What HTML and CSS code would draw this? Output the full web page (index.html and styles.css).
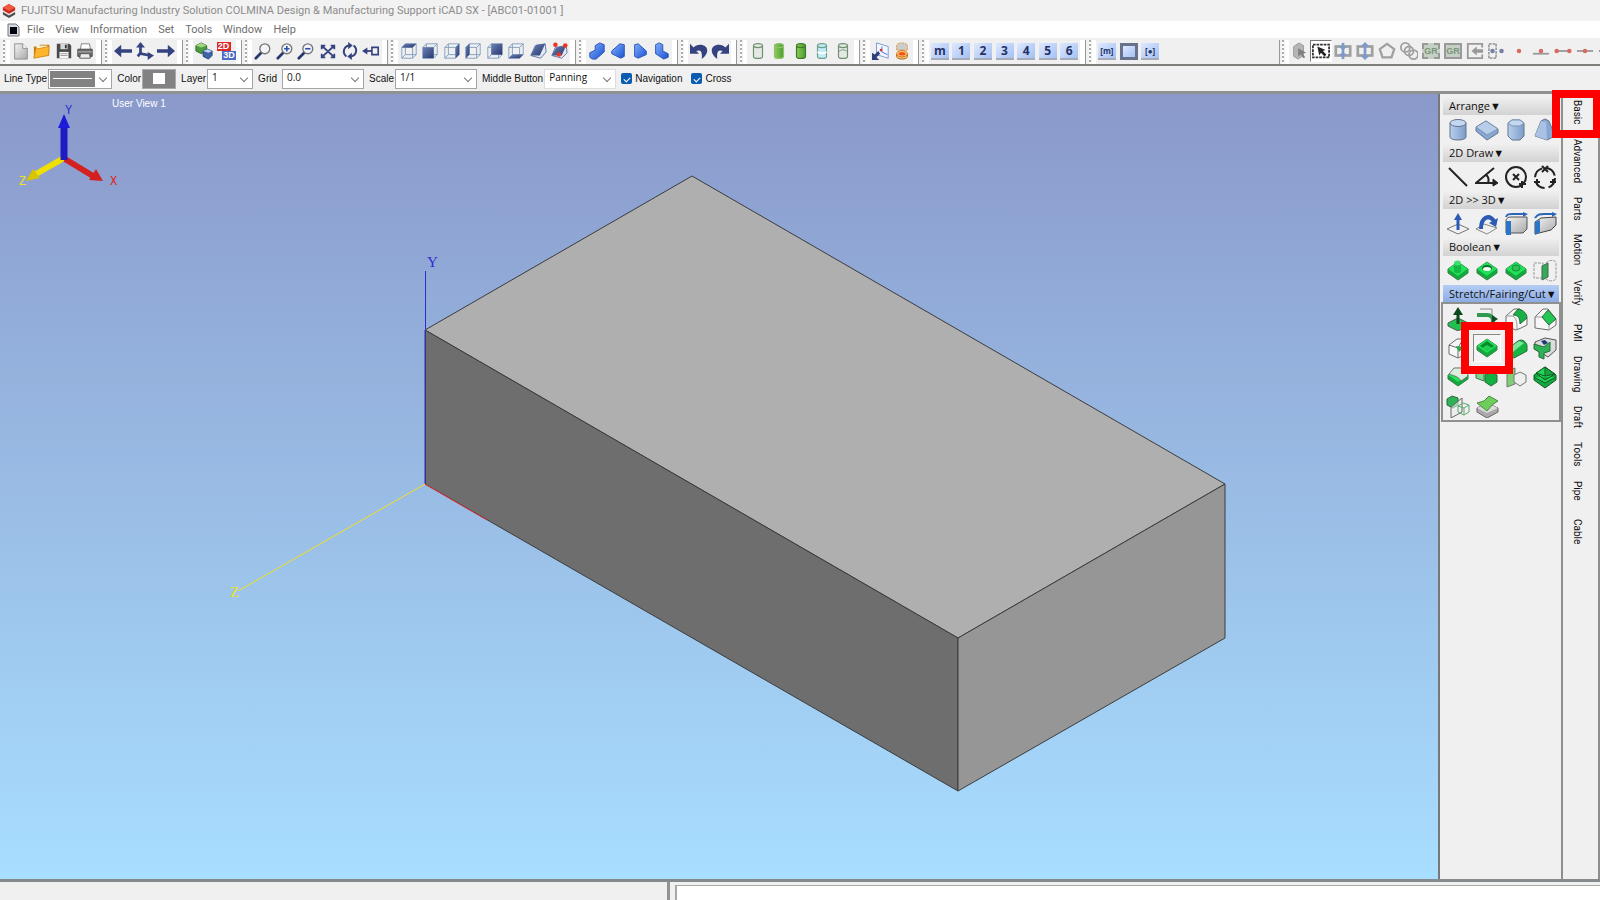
FILE: index.html
```html
<!DOCTYPE html>
<html lang="en">

<head>
    <meta charset="UTF-8">
    <meta name="viewport" content="width=device-width, initial-scale=1.0">
    <title>iCAD SX - [ABC01-01001 ]</title>
    <link rel="stylesheet" href="styles.css">
</head>

<body>
    <!-- shared shapes -->
    <svg class="defs" aria-hidden="true">
        <defs>
            <linearGradient id="g-sky" x1="0" y1="0" x2="0" y2="1">
                <stop offset="0" stop-color="#8a99ca" />
                <stop offset="1" stop-color="#a8deff" />
            </linearGradient>
            <linearGradient id="g-blue" x1="0" y1="0" x2="1" y2="1">
                <stop offset="0" stop-color="#7fb0ff" />
                <stop offset="1" stop-color="#1a4fd0" />
            </linearGradient>
            <linearGradient id="g-steel" x1="0" y1="0" x2="1" y2="0">
                <stop offset="0" stop-color="#b9d0ee" />
                <stop offset="1" stop-color="#7b9cc8" />
            </linearGradient>
            <linearGradient id="g-leaf" x1="0" y1="0" x2="1" y2="0">
                <stop offset="0" stop-color="#8ccc5c" />
                <stop offset="1" stop-color="#4f9a30" />
            </linearGradient>
            <linearGradient id="g-grey" x1="0" y1="0" x2="1" y2="1">
                <stop offset="0" stop-color="#f4f4f4" />
                <stop offset="1" stop-color="#a8a8a8" />
            </linearGradient>
            <linearGradient id="g-navy" x1="0" y1="0" x2="1" y2="1">
                <stop offset="0" stop-color="#6d83b8" />
                <stop offset="1" stop-color="#27376e" />
            </linearGradient>
        </defs>
        <symbol id="wire" viewBox="0 0 20 20">
            <path d="M2 6 6 2h12v12l-4 4H2zM2 6h12v12M14 6l4-4M6 2v12h12M6 14l-4 4" fill="none" stroke="#7d9cc0" />
        </symbol>
        <symbol id="lens" viewBox="0 0 20 20">
            <path d="m2 18 6-6" stroke="#27376e" stroke-width="3" stroke-linecap="round" />
            <circle cx="12" cy="7.500" r="5.500" fill="#f3f5fa" stroke="#777" stroke-width="1.500" />
        </symbol>
        <symbol id="can" viewBox="0 0 20 20">
            <path d="M5 4v12c0 3 10 3 10 0V4" stroke-width="1.300" />
            <ellipse cx="10" cy="4" rx="5" ry="2.200" stroke-width="1.300" />
        </symbol>
        <symbol id="slab" viewBox="0 0 24 24">
            <path d="m12 3 10 7v4l-10 7-10-7v-4z" fill="#12a83e" stroke="#3f7a4c" />
            <path d="m12 3 10 7-10 7-10-7z" fill="#20e058" />
            <path d="M12 17v4l10-7v-4z" fill="#12a83e" />
        </symbol>
        <symbol id="outline-slab" viewBox="0 0 24 24">
            <path d="m3 9 8-6h6l5 6v8l-10 5-9-4zM3 9l9 3v10M12 12l5-9" fill="#f7f7f7" stroke="#6d6d6d" />
        </symbol>
        <symbol id="frame" viewBox="0 0 20 20">
            <rect x="2" y="5" width="16" height="10" fill="none" stroke="#a0a0a0" stroke-width="3" />
        </symbol>
    </svg>

    <div class="main-wrap">
        <header class="title-bar">
            <svg class="app-logo" viewBox="0 0 16 16"><path d="m1 9 7-3 7 3v3l-7 4-7-4z" fill="#4b4b50" /><path d="m1 6 7-3 7 3v3l-7 4-7-4z" fill="#e9e2de" /><path d="m1 4 7-4 7 4v3l-7 4-7-4z" fill="#c92a1a" /><path d="m1 4 7-4 7 4-7 4z" fill="#f0593f" /></svg>
            <h1>FUJITSU Manufacturing Industry Solution COLMINA Design &amp; Manufacturing Support iCAD SX - [ABC01-01001 ]</h1>
        </header>

        <nav class="menu-bar">
            <svg class="doc-logo" viewBox="0 0 13 14"><path d="M1 1h8l3 3v9H1z" fill="#d5d8de" stroke="#777" /><path d="M3 4h7v7H3z" fill="#02030c" /></svg>
            <a href="#">File</a>
            <a href="#">View</a>
            <a href="#">Information</a>
            <a href="#">Set</a>
            <a href="#">Tools</a>
            <a href="#">Window</a>
            <a href="#">Help</a>
        </nav>

        <section class="tool-bar">
            <div class="group w-4">
                <button aria-label="New"><svg viewBox="0 0 20 20"><path d="M3 2h9l5 5v12H3z" fill="url(#g-grey)" stroke="#8a8a8a" /><path d="M12 2v5h5" fill="#fff" stroke="#8a8a8a" /></svg></button>
                <button aria-label="Open"><svg viewBox="0 0 20 20"><path d="M1 17V5h5l2-2h10v12z" fill="#c47a12" /><path d="M4 4h12v5H4z" fill="#fff3cf" /><path d="m1 18 2-10 15-3-1 10z" fill="#ffb52b" stroke="#d28a1a" /></svg></button>
                <button aria-label="Save"><svg viewBox="0 0 20 20"><path d="M2 2h14l2 2v14H2z" fill="#4a4a4a" /><path d="M6 2h8v6H6z" fill="#d8d8d8" /><path d="M11 3h2v4h-2z" fill="#333" /><path d="M5 11h10v7H5z" fill="#f5f5f5" /><path d="M6 13h8M6 15h8" stroke="#999" /></svg></button>
                <button aria-label="Print"><svg viewBox="0 0 20 20"><path d="M5 8 6 2h9l1 6" fill="#fff" stroke="#777" /><path d="M2 8h16v8H2z" fill="#6d6d6d" stroke="#444" /><path d="M2 11h16" stroke="#bbb" /><path d="M5 13h10l1 5H4z" fill="#eee" stroke="#555" /></svg></button>
            </div>
            <div class="group w-3">
                <button aria-label="Previous view"><svg viewBox="0 0 20 20"><path d="m0 10 8-7v5h12v4H8v5z" fill="#34437f" /></svg></button>
                <button aria-label="Axis view"><svg viewBox="0 0 20 20"><path d="M5 4v9l11 2M5 12l-3 4" fill="none" stroke="#34437f" stroke-width="3" /><path d="m5 0 5 6H0zM20 15l-7 5v-9z" fill="#34437f" /></svg></button>
                <button aria-label="Next view"><svg viewBox="0 0 20 20"><path d="m20 10-8-7v5H0v4h12v5z" fill="#34437f" /></svg></button>
            </div>
            <div class="group w-2">
                <button aria-label="Parts"><svg viewBox="0 0 20 20"><path d="m1 4 6-3 6 3v6l-6 3-6-3z" fill="#4d9b3e" stroke="#2e6b25" /><path d="m1 4 6 2 6-2-6-3z" fill="#a1d884" /><path d="m9 10 5-2 5 2v5l-4 4-6-3z" fill="#3f63a8" stroke="#26407a" /><path d="m9 10 6 2 4-2-5-2z" fill="#c1d3f2" /></svg></button>
                <button aria-label="2D 3D" class="dim"><b class="d2">2D</b><b class="d3">3D</b></button>
            </div>
            <div class="group w-6">
                <button aria-label="Zoom window"><svg><use href="#lens" /></svg></button>
                <button aria-label="Zoom in"><svg viewBox="0 0 20 20"><use href="#lens" /><path d="M9 7.500h6M12 4.500v6" stroke="#2d4fae" stroke-width="1.800" /></svg></button>
                <button aria-label="Zoom out"><svg viewBox="0 0 20 20"><use href="#lens" /><path d="M9 7.500h6" stroke="#2d4fae" stroke-width="1.800" /></svg></button>
                <button aria-label="Fit"><svg viewBox="0 0 20 20"><path d="m4 5 12 11M16 5 4 16M3 8V4h4M13 4h4v4M17 13v4h-4M7 17H3v-4" fill="none" stroke="#34437f" stroke-width="2" /></svg></button>
                <button aria-label="Rotate"><svg viewBox="0 0 20 20"><path d="M6 16C1 12 3 5 9 4M14 4c5 4 3 11-3 12" fill="none" stroke="#34437f" stroke-width="2.200" /><path d="m8 0 5 4-5 4zM12 20l-5-4 5-4z" fill="#34437f" /></svg></button>
                <button aria-label="Pan"><svg viewBox="0 0 20 20"><path d="M2 10h9" stroke="#34437f" stroke-width="2" /><path d="m0 10 6-4v8z" fill="#34437f" /><path d="M11 6h7v8h-7z" fill="none" stroke="#34437f" stroke-width="1.800" /></svg></button>
            </div>
            <div class="group w-8">
                <button aria-label="Top"><svg viewBox="0 0 20 20"><use href="#wire" /><path d="m2 6 4-4h12l-4 4z" fill="url(#g-navy)" /></svg></button>
                <button aria-label="Front"><svg viewBox="0 0 20 20"><use href="#wire" /><path d="M2 6h12v12H2z" fill="url(#g-navy)" /></svg></button>
                <button aria-label="Right"><svg viewBox="0 0 20 20"><use href="#wire" /><path d="m14 6 4-4v12l-4 4z" fill="url(#g-navy)" /></svg></button>
                <button aria-label="Left"><svg viewBox="0 0 20 20"><use href="#wire" /><path d="m2 6 4-4v12l-4 4z" fill="url(#g-navy)" /></svg></button>
                <button aria-label="Back"><svg viewBox="0 0 20 20"><use href="#wire" /><path d="M6 2h12v12H6z" fill="url(#g-navy)" /></svg></button>
                <button aria-label="Bottom"><svg viewBox="0 0 20 20"><use href="#wire" /><path d="m2 18 4-4h12l-4 4z" fill="url(#g-navy)" /></svg></button>
                <button aria-label="Face"><svg viewBox="0 0 20 20"><path d="m2 15 5-11 11-2 1 9-6 7z" fill="#e3e9f2" stroke="#58709c" /><path d="m2 15 6-12 10-1-6 13z" fill="url(#g-navy)" /></svg></button>
                <button aria-label="Three points"><svg viewBox="0 0 20 20"><path d="m2 15 4-9 12-2 1 8-6 6z" fill="#e3e9f2" stroke="#58709c" /><path d="m2 15 5-9 11-2-5 11z" fill="url(#g-navy)" /><g fill="#f0321e"><circle cx="6" cy="3" r="2.500" /><circle cx="17" cy="4" r="2.500" /><circle cx="10" cy="14" r="2.500" /></g></svg></button>
            </div>
            <div class="group w-4">
                <button aria-label="Solid 1"><svg viewBox="0 0 20 20"><path d="M2 12 8 9V4l5-3 5 2v8l-9 8H5l-3-2z" fill="url(#g-blue)" stroke="#2a50b0" /></svg></button>
                <button aria-label="Solid 2"><svg viewBox="0 0 20 20"><path d="m3 10 9-8 5 1v13l-4 2-10-5z" fill="url(#g-blue)" stroke="#2a50b0" /></svg></button>
                <button aria-label="Solid 3"><svg viewBox="0 0 20 20"><path d="m4 3 4-1 9 8v4l-9 4-4-2z" fill="url(#g-blue)" stroke="#2a50b0" /></svg></button>
                <button aria-label="Solid 4"><svg viewBox="0 0 20 20"><path d="m4 3 4-2 4 2v7l6 3v4l-5 2-9-6z" fill="url(#g-blue)" stroke="#2a50b0" /></svg></button>
            </div>
            <div class="group w-2">
                <button aria-label="Undo"><svg viewBox="0 0 20 20"><path d="M0 2v11h10L7 10c5-2 7 1 6 9 9-6 8-16-2-16-3 0-5 1-7 3z" fill="#34437f" /></svg></button>
                <button aria-label="Redo"><svg viewBox="0 0 20 20"><path d="M20 2v11H10l3-3c-5-2-7 1-6 9C-2 13-1 3 9 3c3 0 5 1 7 3z" fill="#34437f" /></svg></button>
            </div>
            <div class="group w-5">
                <button aria-label="Hidden line"><svg class="can-grey"><use href="#can" /></svg></button>
                <button aria-label="Shade"><svg class="can-lime"><use href="#can" /></svg></button>
                <button aria-label="Shade with edges"><svg class="can-green"><use href="#can" /></svg></button>
                <button aria-label="Transparent"><svg class="can-glass" viewBox="0 0 20 20"><use href="#can" /><path d="M5 11c2 2 8 2 10 0" fill="none" stroke="#fff" stroke-width="2" /></svg></button>
                <button aria-label="Wireframe"><svg class="can-grey" viewBox="0 0 20 20"><use href="#can" /><path d="M5 11c2-3 8-3 10 0" fill="none" stroke="#6f8f6f" /></svg></button>
            </div>
            <div class="group w-2">
                <button aria-label="Work plane"><svg viewBox="0 0 20 20"><path d="m5 1 13 4v13L5 14z" fill="#f4f7ff" stroke="#7694d4" /><path d="M11 5v6l6 3" fill="none" stroke="#3867e0" /><circle cx="10" cy="9" r="1.500" fill="#e03020" /><path d="M0 20v-8l3 2 4-4 2 3-4 4 3 3z" fill="#2f3f7c" /></svg></button>
                <button aria-label="Section"><svg viewBox="0 0 20 20"><path d="M4 4v5h12V4c0-4-12-4-12 0z" fill="#ccc" stroke="#e0902a" stroke-dasharray="2 1" /><path d="M4 13v3c0 4 12 4 12 0v-3" fill="#f9c06a" stroke="#a85c14" /><ellipse cx="10" cy="13" rx="6" ry="3.500" fill="#ffd07a" stroke="#c8701c" /><ellipse cx="10" cy="13" rx="4" ry="2" fill="#f0521c" /></svg></button>
            </div>
            <div class="group keys w-7">
                <button><b>m</b></button>
                <button><b>1</b></button>
                <button><b>2</b></button>
                <button><b>3</b></button>
                <button><b>4</b></button>
                <button><b>5</b></button>
                <button><b>6</b></button>
            </div>
            <div class="group keys last w-3">
                <button aria-label="Mask"><b class="small">[m]</b></button>
                <button aria-label="Area"><b class="on"></b></button>
                <button aria-label="Center"><b class="small">[●]</b></button>
            </div>

            <div class="group right">
                <button aria-label="Pick solid"><svg viewBox="0 0 20 20"><path d="m4 5 6-4 5 3v11l-6 4-5-3z" fill="#b5b5b5" stroke="#999" /><path d="m9 7 9 5-4 1 3 4-2 1-3-4-3 2z" fill="#808080" /></svg></button>
                <button aria-label="Pick box" class="picked"><svg viewBox="0 0 20 20"><path d="M1 3h18v14H1z" fill="#fff" stroke="#333" stroke-width="2" stroke-dasharray="3 1" /><path d="m6 5 9 4-3 1 4 4-2 2-4-4-2 3z" fill="#222" /></svg></button>
                <button aria-label="Cross in"><svg viewBox="0 0 20 20"><use href="#frame" /><path d="M10 1v18" stroke="#7d9acb" stroke-width="3" /><path d="m10 9-5-4h10zM10 11l-5 4h10z" fill="#7d9acb" /></svg></button>
                <button aria-label="Cross out"><svg viewBox="0 0 20 20"><use href="#frame" /><path d="M10 3v14" stroke="#7d9acb" stroke-width="3" /><path d="m10 0 5 5H5zM10 20l-5-5h10z" fill="#7d9acb" /></svg></button>
                <button aria-label="Polygon"><svg viewBox="0 0 20 20"><path d="m10 2 8 6-3 9H5L2 8z" fill="none" stroke="#a0a0a0" stroke-width="2.500" /></svg></button>
                <button aria-label="Chain"><svg viewBox="0 0 20 20"><g fill="none" stroke="#a0a0a0" stroke-width="2"><circle cx="6" cy="6" r="5" /><circle cx="10" cy="10" r="5" /><circle cx="15" cy="14" r="5" /></g></svg></button>
                <button aria-label="Group"><b class="gr dashed">GR</b></button>
                <button aria-label="Group window"><b class="gr">GR</b></button>
                <button aria-label="Enter"><svg viewBox="0 0 20 20"><path d="M18 6V2H2v16h16v-4" fill="none" stroke="#999" stroke-width="2" /><path d="m6 10 6-5v3h7v4h-7v3z" fill="#999" /></svg></button>
                <button aria-label="Element"><svg viewBox="0 0 20 20"><path d="M1 2h8v16H1z" fill="none" stroke="#a0a0a0" stroke-width="2" stroke-dasharray="3 1" /><g fill="#7380a8"><circle cx="5" cy="10" r="2.500" /><circle cx="15" cy="10" r="2.500" /></g></svg></button>
                <button aria-label="Point"><svg viewBox="0 0 20 20"><circle cx="10" cy="10" r="2.500" fill="#d96a62" /></svg></button>
                <button aria-label="On line"><svg viewBox="0 0 20 20"><path d="M1 13h18" stroke="#999" stroke-width="2" /><circle cx="10" cy="10" r="2.500" fill="#d96a62" /></svg></button>
                <button aria-label="End points"><svg viewBox="0 0 20 20"><path d="M3 10h14" stroke="#999" stroke-width="2" /><circle cx="3" cy="10" r="2.500" fill="#d96a62" /><circle cx="17" cy="10" r="2.500" fill="#d96a62" /></svg></button>
                <button aria-label="Middle point"><svg viewBox="0 0 20 20"><path d="M1 10h18" stroke="#999" stroke-width="2" /><circle cx="10" cy="10" r="2.500" fill="#d96a62" /></svg></button>
                <button aria-label="Division"><svg viewBox="0 0 20 20"><path d="M1 10h18" stroke="#999" stroke-width="2" /></svg></button>
            </div>
        </section>

        <section class="option-bar">
            <label for="line-type">Line Type</label>
            <span class="pick line"><select id="line-type"><option></option></select></span>
            <label for="color">Color</label>
            <button id="color" class="color-btn"><i></i></button>
            <label for="layer">Layer</label>
            <span class="pick short"><select id="layer"><option>1</option></select></span>
            <label for="grid" class="wide">Grid</label>
            <span class="pick"><select id="grid"><option>0.0</option></select></span>
            <label for="scale">Scale</label>
            <span class="pick"><select id="scale"><option>1/1</option></select></span>
            <label for="middle">Middle Button</label>
            <span class="pick mid"><select id="middle"><option>Panning</option></select></span>
            <label class="check"><input type="checkbox" checked>Navigation</label>
            <label class="check"><input type="checkbox" checked>Cross</label>
        </section>

        <main class="body-wrap">
            <section class="view-wrap">
                <svg class="scene" viewBox="0 0 1438 785" preserveAspectRatio="xMidYMid slice">
                    <rect x="-800" y="0" width="3000" height="785" fill="url(#g-sky)" />
                    <g stroke="#3c3c3c" stroke-linejoin="round">
                        <path d="m692 82 533 308-267 154L425 236z" fill="#afafaf" />
                        <path d="m425 236 533 308v153L425 390z" fill="#6e6e6e" />
                        <path d="m958 544 267-154v154L958 697z" fill="#969696" />
                    </g>
                    <path d="M425 177v213" stroke="#2c2cd2" shape-rendering="crispEdges" />
                    <path d="m425 390-187 107" stroke="#f0e020" />
                    <path d="m425 390 62 36" stroke="#e03030" />
                    <text x="427" y="173" class="axis-y big">Y</text>
                    <text x="230" y="503" class="axis-z big">Z</text>

                    <path d="M64 64 36 80" stroke="#f0e000" stroke-width="6" />
                    <path d="m26 87 7-12 7 9z" fill="#d8c400" />
                    <path d="m65 65 28 17" stroke="#d42020" stroke-width="6" />
                    <path d="m103 87-14-1 7-11z" fill="#d42020" />
                    <path d="M64 66V32" stroke="#1c1cc0" stroke-width="7" />
                    <path d="m64 20 6 14H58z" fill="#1c1cd8" />
                    <text x="65" y="20" class="axis-y">Y</text>
                    <text x="19" y="91" class="axis-z">Z</text>
                    <text x="110" y="91" class="axis-x">X</text>
                    <text x="112" y="13" class="view-name">User View 1</text>
                </svg>
            </section>

            <aside class="side-panel">
                <h2>Arrange▼</h2>
                <div class="icons">
                    <button aria-label="Cylinder"><svg viewBox="0 0 24 24"><path d="M4 5v14c0 4 16 4 16 0V5" fill="url(#g-steel)" stroke="#64748c" /><ellipse cx="12" cy="5" rx="8" ry="3.500" fill="#c4d8f2" stroke="#64748c" /></svg></button>
                    <button aria-label="Block"><svg viewBox="0 0 24 24"><path d="m1 9 10-6 12 8v4l-11 7L1 13z" fill="#86a6d4" stroke="#64748c" /><path d="m1 9 10-6 12 8-11 6z" fill="#b8cdea" stroke="#7f93b0" /></svg></button>
                    <button aria-label="Prism"><svg viewBox="0 0 24 24"><path d="m4 5 4-3h8l4 3v13l-4 4H8l-4-4z" fill="url(#g-steel)" stroke="#64748c" /><path d="m4 5 4-3h8l4 3-4 3H8z" fill="#c4d8f2" stroke="#7f93b0" /></svg></button>
                    <button aria-label="Pyramid"><svg viewBox="0 0 24 24"><path d="m8 3 4-2 4 2 6 15-8 4-12-4z" fill="#86a6d4" stroke="#64748c" /><path d="m8 3 5 1 1 18-12-4z" fill="#a9c2e4" /></svg></button>
                </div>
                <h2>2D Draw▼</h2>
                <div class="icons ink">
                    <button aria-label="Line"><svg viewBox="0 0 24 24"><path d="m3 3 18 18" stroke-width="2" /></svg></button>
                    <button aria-label="Angle line"><svg viewBox="0 0 24 24"><path d="M19 3 1 18h19M11 10c3 2 3 5 2 8" stroke-width="2" /><path d="m18 14 5 4-5 3z" fill="#222" /></svg></button>
                    <button aria-label="Circle"><svg viewBox="0 0 24 24"><circle cx="12" cy="12" r="10" stroke-width="2" /><path d="m9 9 6 6M15 9l-6 6M18 16v7M15 19h7" stroke-width="2" /></svg></button>
                    <button aria-label="Three point circle"><svg viewBox="0 0 24 24"><circle cx="12" cy="13" r="10" stroke-width="2" stroke-dasharray="12 4" /><path d="m9 1 6 6M15 1 9 7M4 14v6M1 17h6M20 14v6M17 17h6" stroke-width="2" /></svg></button>
                </div>
                <h2>2D &gt;&gt; 3D▼</h2>
                <div class="icons">
                    <button aria-label="Extrude"><svg viewBox="0 0 24 24"><path d="m1 17 11-5 11 5-11 5z" fill="none" stroke="#777" /><path d="M12 18V6" stroke="#2b5bb5" stroke-width="3" /><path d="m12 1 4 7H8z" fill="#2b5bb5" /></svg></button>
                    <button aria-label="Revolve"><svg viewBox="0 0 24 24"><path d="m1 17 8-5 13 4-10 6z" fill="none" stroke="#888" /><path d="M6 17C6 5 14 2 19 9" fill="none" stroke="#2b5bb5" stroke-width="4" /><path d="m23 6-2 9-7-4z" fill="#2b5bb5" /></svg></button>
                    <button aria-label="Sweep"><svg viewBox="0 0 24 24"><path d="M2 8c1-2 2-3 5-3h16v12l-4 4H2z" fill="url(#g-grey)" stroke="#555" /><path d="M2 9h5v14H2z" fill="#2a76c6" /><path d="M2 5c1-3 3-3 6-3h12" fill="none" stroke="#2b65b5" stroke-width="2" /><path d="m19 0 5 2-5 3z" fill="#2b65b5" /></svg></button>
                    <button aria-label="Loft"><svg viewBox="0 0 24 24"><path d="m2 10 6-4 15-1v8l-5 5-16 4z" fill="url(#g-grey)" stroke="#444" /><path d="m2 10 5-2v12l-5 3z" fill="#2a76c6" /><path d="M2 6c3-4 5-4 9-4h9" fill="none" stroke="#2b65b5" stroke-width="2" /><path d="m19 0 5 2-5 3z" fill="#2b65b5" /></svg></button>
                </div>
                <h2>Boolean▼</h2>
                <div class="icons">
                    <button aria-label="Unite"><svg viewBox="0 0 24 24"><use href="#slab" /><path d="M8 4v8c0 3 7 3 7 0V4" fill="#15b845" /><ellipse cx="11.500" cy="4" rx="3.500" ry="2.500" fill="#3ce06c" /></svg></button>
                    <button aria-label="Subtract"><svg viewBox="0 0 24 24"><use href="#slab" /><ellipse cx="12" cy="9" rx="5" ry="3" fill="#0f6b2c" /><ellipse cx="12" cy="10" rx="4" ry="2" fill="#f5fff5" /></svg></button>
                    <button aria-label="Intersect"><svg viewBox="0 0 24 24"><use href="#slab" /><ellipse cx="12" cy="9" rx="4" ry="3" fill="#2cc456" stroke="#168a38" /></svg></button>
                    <button aria-label="Split"><svg viewBox="0 0 24 24"><path d="M1 4h9v15H1zM13 4c4-4 10-3 10 0v15c0 3-7 4-10 1" fill="none" stroke="#999" stroke-dasharray="3 1" /><path d="m9 7 6-3v14l-6 3z" fill="#36a85a" stroke="#41694c" /></svg></button>
                </div>
                <h2 class="open">Stretch/Fairing/Cut▼</h2>
                <div class="icons box">
                    <button aria-label="Stretch"><svg viewBox="0 0 24 24"><path d="m2 16 10-5 10 5v3l-10 5-10-5z" fill="#1fc24e" stroke="#555" /><path d="M12 17V6" stroke="#0c4a1e" stroke-width="3" /><path d="m12 0 5 8H7z" fill="#0c4a1e" /></svg></button>
                    <button aria-label="Stretch along"><svg viewBox="0 0 24 24"><path d="M5 2h12v12" fill="none" stroke="#888" /><path d="M2 8h10c8 0 8 11 0 11H8" fill="none" stroke="#2f9a4e" stroke-width="4" /><path d="m17 8 6 4-6 4z" fill="#124d24" /></svg></button>
                    <button aria-label="Fillet"><svg viewBox="0 0 24 24"><path d="m2 9 8-7h6l7 9v7l-6 3-5 2-10-4z" fill="#f7f7f7" stroke="#6d6d6d" /><path d="M2 9h6c4 1 5 5 5 13" fill="none" stroke="#999" /><path d="M14 2c6 1 9 5 9 9l-7 6c0-6-2-9-7-9z" fill="#18b047" stroke="#2c6b3e" /></svg></button>
                    <button aria-label="Chamfer"><svg viewBox="0 0 24 24"><path d="m2 10 8-8h5l8 10v6l-7 5-14-2z" fill="#f7f7f7" stroke="#6d6d6d" /><path d="M2 10h7l7 8v5" fill="none" stroke="#999" /><path d="m15 3 8 9-7 6-7-8z" fill="#22c853" stroke="#2c6b3e" /></svg></button>
                    <button aria-label="Draft face"><svg viewBox="0 0 24 24"><use href="#outline-slab" /><path d="m10 10 8 1-5 5z" fill="#18b047" /></svg></button>
                    <button aria-label="Shell" class="pressed"><svg viewBox="0 0 24 24"><use href="#slab" /><path d="m12 5 7 5-7 5-7-5z" fill="#0a8a2e" /><path d="m12 9 5 3-5 3-5-3z" fill="#1ed052" /></svg></button>
                    <button aria-label="Round"><svg viewBox="0 0 24 24"><path d="m2 14 12-9c5-3 9 2 9 5v5L10 22l-8-3z" fill="#15b544" stroke="#2c6b3e" /><path d="m2 14 13-9 5 2-11 9z" fill="#7be69a" /></svg></button>
                    <button aria-label="Cut part"><svg viewBox="0 0 24 24"><path d="m2 6 10-4 11 2v10l-8 7-13-8z" fill="#d9dcd9" stroke="#555" /><path d="m1 8 10 3 6-5v9l-6 2v6l-5-2v-5l-5-3z" fill="#2eb255" stroke="#2c6b3e" /><path d="m8 5 4-1 3 3-4 2z" fill="#1c3a78" /></svg></button>
                    <button aria-label="Cut surface"><svg viewBox="0 0 24 24"><use href="#slab" /><path d="m3 9 5-6h12l2 8-7 5c-2-4-6-5-12-7z" fill="#d9eede" stroke="#777" /></svg></button>
                    <button aria-label="Cut plane"><svg viewBox="0 0 24 24"><path d="m1 7 8-3v12l-8-3z" fill="#7bd892" stroke="#3c7a4d" /><path d="m10 10 6-3 6 3v7l-6 4-6-4z" fill="#14b041" stroke="#2c6b3e" /></svg></button>
                    <button aria-label="Keep side"><svg viewBox="0 0 24 24"><path d="m3 6 8-3v16l-8 3z" fill="#7fcf74" stroke="#777" /><path d="m10 10 6-3 6 3v7l-6 4-6-4z" fill="#eee" stroke="#777" /></svg></button>
                    <button aria-label="Offset"><svg viewBox="0 0 24 24"><path d="m1 10 11-8 11 8v5l-11 8-11-8z" fill="#12a83e" stroke="#145a28" /><path d="m3 8 9-6 10 7-10 6zM12 2v9l10-2M1 12l11 6 11-6M12 11l-9-3" fill="#22d355" stroke="#145a28" /></svg></button>
                    <button aria-label="Mirror"><svg viewBox="0 0 24 24"><path d="m1 5 5-3 6 2v7l-5 3-6-3z" fill="#2eb255" stroke="#2c6b3e" /><path d="m5 13 11-9v14L5 24z" fill="#e8ece8" fill-opacity=".6" stroke="#666" /><path d="m12 12 5-3 6 2v7l-5 3-6-3zM12 12l6 2 5-3M18 14v7" fill="none" stroke="#5bab70" /></svg></button>
                    <button aria-label="Layers"><svg viewBox="0 0 24 24"><path d="m2 14 10-5 11 5v4l-11 6-10-6z" fill="#aaa" stroke="#666" /><path d="m2 14 10-5 11 5-11 5z" fill="#dcdcdc" /><path d="m2 9 7-2 5-5 9 5-6 4-5 6z" fill="#6fce5a" stroke="#4e8a45" /></svg></button>
                </div>
            </aside>

            <nav class="tab-bar">
                <button class="active">Basic</button>
                <button>Advanced</button>
                <button>Parts</button>
                <button>Motion</button>
                <button class="end">Verify</button>
                <button>PMI</button>
                <button>Drawing</button>
                <button>Draft</button>
                <button>Tools</button>
                <button class="end">Pipe</button>
                <button>Cable</button>
            </nav>
        </main>

        <footer class="footer-wrap">
            <div class="message"></div>
            <input type="text" class="command" aria-label="Command">
        </footer>
    </div>
</body>

</html>
```
FILE: styles.css
```css
*,
*::before,
*::after {
    box-sizing: border-box;
}

html,
body {
    padding: 0;
    margin: 0;

    height: 100%;
    width: 100%;
    overflow: hidden;
}

body {
    background-color: #f0f0f0;
    font: 10px/12px "Liberation Sans", Arial, sans-serif;
    color: #111;
}

button {
    border: 0;
    padding: 0;
    margin: 0;
    background: none;
    color: inherit;
    font: inherit;
}

.defs {
    position: absolute;
    width: 0;
    height: 0;
}

.main-wrap {
    display: flex;
    flex-direction: column;
    height: 100%;
}

/* title and menu */
.title-bar {
    display: flex;
    align-items: center;
    gap: 5px;
    height: 21px;
    padding-left: 2px;
    background-color: #f2f2f2;
}

.title-bar h1 {
    margin: 0;
    font: 11px/16px Roboto, sans-serif;
    color: #8c8c8c;
    white-space: nowrap;
}

.app-logo {
    width: 14px;
    height: 16px;
}

.menu-bar {
    display: flex;
    align-items: center;
    gap: 11px;
    height: 17px;
    padding-left: 7px;
    background-color: #fff;
}

.menu-bar a {
    font: 11px/16px Roboto, sans-serif;
    color: #6e6e6e;
    text-decoration: none;
}

.doc-logo {
    width: 13px;
    height: 14px;
    margin-right: -4px;
}

/* icon tool bar */
.tool-bar {
    display: flex;
    height: 28px;
    padding-left: 3px;
    border-bottom: 2px solid #7c7f7a;
    overflow: hidden;
}

.group {
    display: flex;
    flex: none;
    align-items: center;
    position: relative;
    padding: 0 9px 0 7px;
}

.group::before {
    content: "";
    position: absolute;
    left: 0;
    top: 2px;
    bottom: 0;
    width: 7px;
    border-right: 4px solid #fff;
    background: repeating-linear-gradient(#aaa 0 2px, #fff 2px 4px);
    background-size: 2px 100%;
    background-repeat: no-repeat;
}

.group::after {
    content: "";
    position: absolute;
    right: 3px;
    top: 2px;
    bottom: 0;
    width: 6px;
    border-right: 1px solid #999;
    background-color: #fff;
}

.group.last::after {
    display: none;
}

.group button {
    display: flex;
    flex: 1;
    align-items: center;
    justify-content: center;
    height: 22px;
}

.group svg {
    flex: none;
    width: 18px;
    height: 18px;
}

.w-2 {
    width: 59px;
}

.w-3 {
    width: 81px;
}

.w-4 {
    width: 102px;
}

.w-5 {
    width: 123px;
}

.w-6 {
    width: 146px;
}

.w-7 {
    width: 167px;
}

.w-8 {
    width: 188px;
}

.group .dim {
    flex-direction: column;
    font: bold 9px/9px "Liberation Sans", Arial, sans-serif;
    color: #fff;
}

.dim b {
    width: 14px;
    text-align: center;
}

.d2 {
    align-self: flex-start;
    margin-left: 2px;
    background-color: #e02a2a;
}

.d3 {
    align-self: flex-end;
    background-color: #4a6cc4;
}

.can-grey {
    fill: #e4e8e4;
    stroke: #6f8f6f;
}

.can-lime {
    fill: url(#g-leaf);
    stroke: #8cc468;
}

.can-green {
    fill: url(#g-leaf);
    stroke: #3d7a26;
}

.can-glass {
    fill: #c2ebf8;
    stroke: #6ea08c;
}

.keys b {
    display: flex;
    align-items: center;
    justify-content: center;
    width: 18px;
    height: 17px;
    border-bottom: 2px solid #a8acb8;
    background: linear-gradient(135deg, #dde9ff, #a5c0f4);
    font: bold 12px/15px "Open Sans", sans-serif;
    color: #253266;
}

.keys .small {
    font-size: 8px;
}

.keys .on {
    border: 3px solid #68728c;
}

.group.right {
    width: 321px;
    margin-left: auto;
    padding: 0 0 0 9px;
    overflow: hidden;
}

.right::before {
    left: 3px;
}

.right::after {
    left: 0;
    width: 1px;
}

.group.right button {
    flex: none;
    width: 22px;
}

.group .picked {
    border: 1px solid #777;
    border-color: #777 #fff #fff #777;
    background-color: #fff;
}

.gr {
    width: 18px;
    height: 16px;
    border: 2px solid #999;
    background-color: #c5d0c5;
    font: bold 9px/12px "Liberation Sans", Arial, sans-serif;
    color: #7b967b;
    text-align: center;
}

.gr.dashed {
    border-style: dashed;
}

/* options */
.option-bar {
    display: flex;
    align-items: center;
    gap: 5px;
    height: 28px;
    padding-left: 4px;
    border-bottom: 3px solid #8f928f;
    white-space: nowrap;
}

.option-bar > label {
    margin-right: -4px;
}

.option-bar .wide {
    margin-right: 0;
}

.pick {
    position: relative;
    width: 82px;
    height: 20px;
}

.pick.line {
    width: 64px;
}

.pick.short {
    width: 46px;
}

.pick.mid {
    width: 72px;
}

.pick::after {
    content: "";
    position: absolute;
    right: 6px;
    top: 6px;
    width: 6px;
    height: 6px;
    border: solid #777;
    border-width: 0 1px 1px 0;
    transform: rotate(45deg);
    pointer-events: none;
}

.pick select {
    appearance: none;
    width: 100%;
    height: 100%;
    padding: 0 4px 4px;
    border: 1px solid #a5a5a5;
    border-radius: 0;
    background-color: #fff;
    font: 10px/14px "Open Sans", sans-serif;
    color: #111;
}

.pick.mid select {
    border-color: #ddd;
}

.pick.line select {
    background: linear-gradient(#fff, #fff) 4px 8px / 39px 1px no-repeat, linear-gradient(#828282, #828282) 1px 1px / 45px 16px no-repeat, #fff;
}

.color-btn {
    display: flex;
    align-items: center;
    justify-content: center;
    width: 34px;
    height: 20px;
    border: 1px solid #aaa;
    background-color: #828282;
}

.color-btn i {
    width: 12px;
    height: 11px;
    background-color: #fff;
}

.check {
    display: flex;
    align-items: center;
    gap: 3px;
}

.option-bar .check {
    margin-right: 4px;
}

.check input {
    appearance: none;
    display: flex;
    align-items: center;
    justify-content: center;
    width: 11px;
    height: 11px;
    margin: 0;
    border-radius: 2px;
    background-color: #0b5cb0;
}

.check input:checked::before {
    content: "";
    width: 6px;
    height: 4px;
    border: solid #fff;
    border-width: 0 0 1px 1px;
    transform: rotate(-45deg);
}

/* model view */
.body-wrap {
    display: flex;
    flex: 1;
    min-height: 0;
}

.view-wrap {
    flex: 1;
    min-width: 0;
    border-right: 2px solid #777;
}

.scene {
    display: block;
    width: 100%;
    height: 100%;
}

.scene text {
    font: 12px "Liberation Mono", monospace;
}

.scene .big {
    font: 15px "Liberation Serif", serif;
}

.scene .view-name {
    font: 10px "Liberation Sans", Arial, sans-serif;
    fill: #fff;
}

.axis-x {
    fill: #e02020;
}

.axis-y {
    fill: #2c2cd2;
}

.axis-z {
    fill: #f0e020;
}

/* command panel */
.side-panel {
    width: 121px;
    padding: 3px 2px 0 3px;
}

.side-panel h2 {
    height: 18px;
    margin: 0;
    padding-left: 6px;
    background: linear-gradient(#f0f0f0, #d2d2d2);
    font: 11px/18px "Open Sans", sans-serif;
    white-space: nowrap;
}

.side-panel .open {
    background: linear-gradient(#b4cdf5, #8aaae4);
}

.icons {
    display: grid;
    grid-template-columns: repeat(4, 1fr);
    grid-auto-rows: 29px;
    place-items: center;
}

.icons svg {
    display: block;
    width: 24px;
    height: 24px;
}

.ink {
    fill: none;
    stroke: #222;
}

.box {
    margin: -1px -2px 0;
    border: 2px solid #909090;
}

.icons .pressed {
    position: relative;
    width: 28px;
    height: 28px;
    padding: 1px;
    border: 1px solid #fff;
    border-color: #888 #fff #fff #888;
    background-color: #f4f4f4;
}

/* red marks round the command and the tab */
.pressed::after,
.tab-bar::after {
    content: "";
    position: absolute;
    z-index: 2;
    border: 8px solid #f00;
}

.pressed::after {
    inset: -13px;
}

.tab-bar::after {
    left: -11px;
    top: -4px;
    width: 49px;
    height: 48px;
}

.tab-bar {
    display: flex;
    flex-direction: column;
    position: relative;
    gap: 14px;
    width: 39px;
    padding: 6px 4px 0 0;
    border-left: 2px solid #8c8f8a;
    border-right: 2px solid #8c8f8a;
}

.tab-bar button {
    writing-mode: vertical-rl;
    width: 28px;
    font: 10px/14px Roboto, sans-serif;
    text-align: left;
}

.tab-bar .end {
    margin-bottom: 5px;
}

/* status line */
.footer-wrap {
    display: flex;
    height: 21px;
    border-top: 3px solid #858a8c;
}

.message {
    width: calc(42% - 2px);
    border-right: 3px solid #929292;
}

.command {
    flex: 1;
    margin: 3px 0 0 5px;
    border: solid #a8a8a8;
    border-width: 1px 0 0 2px;
    background-color: #fff;
}
```
